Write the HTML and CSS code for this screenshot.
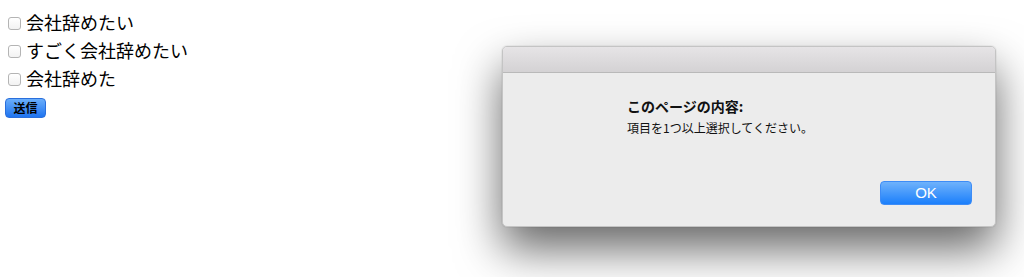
FILE: index.html
```html
<!DOCTYPE html>
<html lang="ja">
<head>
<meta charset="utf-8">
<title>会社辞めたい</title>
<link rel="stylesheet" href="styles.css">
</head>
<body>
<form class="form">
  <label class="row"><input type="checkbox" class="check"><span class="label-text">会社辞めたい</span></label>
  <label class="row"><input type="checkbox" class="check"><span class="label-text">すごく会社辞めたい</span></label>
  <label class="row"><input type="checkbox" class="check"><span class="label-text">会社辞めた</span></label>
  <button type="button" class="submit">送信</button>
</form>

<div class="dialog">
  <div class="titlebar"></div>
  <div class="dialog-body">
    <div class="dialog-title">このページの内容:</div>
    <div class="dialog-message">項目を1つ以上選択してください。</div>
    <div class="dialog-actions">
      <button type="button" class="ok">OK</button>
    </div>
  </div>
</div>
</body>
</html>
```

FILE: styles.css
```css
html, body {
  margin: 0;
  padding: 0;
  background: #ffffff;
}

body {
  width: 1024px;
  height: 277px;
  overflow: hidden;
  position: relative;
  font-family: "Noto Sans CJK JP", "Noto Sans", sans-serif;
  color: #000;
}

.form {
  display: flex;
  flex-direction: column;
  align-items: flex-start;
  padding: 8px 0 0 5px;
}

.row {
  display: flex;
  align-items: flex-start;
  height: 28px;
  line-height: 28px;
  font-size: 18px;
}

.check {
  -webkit-appearance: none;
  appearance: none;
  width: 13px;
  height: 13px;
  margin: 9px 5px 0 3px;
  border: 1px solid #b4b4b4;
  border-radius: 3px;
  background: linear-gradient(#ffffff, #f2f2f2);
  box-sizing: border-box;
}

.label-text {
  white-space: nowrap;
}

.submit {
  margin-top: 6px;
  width: 41px;
  height: 20px;
  padding: 0;
  border: 1px solid #2a6fdc;
  border-radius: 4px;
  background: linear-gradient(#6aaefb, #1f74f0);
  font-family: "Noto Sans CJK JP", sans-serif;
  font-weight: bold;
  font-size: 12px;
  line-height: 18px;
  color: #000;
}

.dialog {
  position: absolute;
  left: 502px;
  top: 46px;
  width: 494px;
  height: 181px;
  box-sizing: border-box;
  display: flex;
  flex-direction: column;
  background: #ececec;
  border: 1px solid #c4c4c4;
  border-radius: 5px;
  overflow: hidden;
  box-shadow: 0 0 0 1px rgba(0, 0, 0, 0.04), 0 22px 45px rgba(0, 0, 0, 0.6);
}

.dialog-shadow-fix {
  display: none;
}

.titlebar {
  height: 25px;
  flex: none;
  background: linear-gradient(#e6e4e6, #d4d2d4);
  border-bottom: 1px solid #b9b9b9;
}

.dialog-body {
  flex: 1;
  display: flex;
  flex-direction: column;
  padding: 24px 23px 21px 124px;
}

.dialog-title {
  font-size: 14px;
  font-weight: bold;
  line-height: 18px;
  color: #111;
}

.dialog-message {
  margin-top: 5px;
  font-size: 12px;
  line-height: 16px;
  color: #111;
}

.dialog-actions {
  margin-top: auto;
  display: flex;
  justify-content: flex-end;
}

.ok {
  width: 92px;
  height: 24px;
  padding: 0;
  border: 1px solid #3d8cf6;
  border-radius: 4px;
  background: linear-gradient(#6fb2fb, #1b7ffb);
  color: #fff;
  font-family: "Liberation Sans", "Noto Sans", sans-serif;
  font-size: 15px;
  line-height: 22px;
}
```
